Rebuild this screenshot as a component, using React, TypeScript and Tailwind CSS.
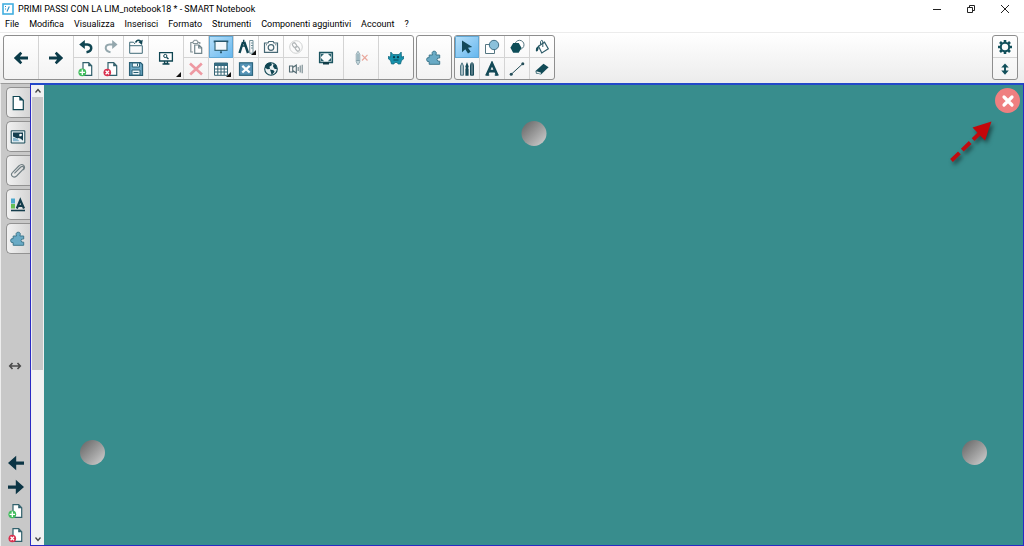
import React from "react";

type IconProps = { children: React.ReactNode; size?: "sm" | "md" };

function Icon({ children, size = "md" }: IconProps) {
  const cls = size === "sm" ? "size-3" : "size-4";
  return (
    <svg viewBox="0 0 16 16" className={`${cls} shrink-0`} fill="none" aria-hidden="true">
      {children}
    </svg>
  );
}

const INK = "#0f4552";
const BLUE = "#6faac6";

const ArrowLeft = () => (
  <Icon>
    <path d="M.8 8 7.4 1.8 9.2 3.4 6.9 6.4H15V9.6H6.9L9.2 12.6 7.4 14.2Z" fill="#0b3b49" />
  </Icon>
);
const ArrowRight = () => (
  <Icon>
    <path d="M15.2 8 8.6 1.8 6.8 3.4 9.1 6.4H1V9.6H9.1L6.8 12.6 8.6 14.2Z" fill="#0b3b49" />
  </Icon>
);
const PrevPage = () => (
  <Icon>
    <path d="M0 8 8.2 .8V6.4H16V9.7H8.2V15.2Z" fill="#0b3444" />
  </Icon>
);
const NextPage = () => (
  <Icon>
    <path d="M16 8 7.8 .8V6.4H0V9.7H7.8V15.2Z" fill="#0b3444" />
  </Icon>
);
const Undo = () => (
  <Icon>
    <path d="M4 5.5H9.5Q13.3 5.8 13.3 9.2 13 12.5 8.5 13.3" stroke={INK} strokeWidth="2.4" />
    <path d="M1.2 5.5 6.8 1V10Z" fill={INK} />
  </Icon>
);
const Redo = () => (
  <Icon>
    <path d="M12 5.5H6.5Q2.7 5.8 2.7 9.2 3 12.5 7.5 13.3" stroke="#94a7ad" strokeWidth="2" />
    <path d="M14.5 5.5 9.2 1V10Z" fill="#94a7ad" />
  </Icon>
);
const OpenFolder = () => (
  <Icon>
    <path d="M1.7 14.3V3.2H5.5L7 5M1.7 14.3H14.3V6.7H1.7" stroke="#416c79" />
    <path d="M7.5 3.5Q10-.3 12.7 2.4" stroke={INK} strokeWidth="1.5" />
    <path d="M10.4 3 14.7.8 14 6Z" fill={INK} />
  </Icon>
);
const AddPage = () => (
  <Icon>
    <path d="M5 1.7H10.7L13.7 4.7V14.3H5Z" fill="#fff" stroke="#31606c" strokeWidth="1.2" />
    <path d="M10.2 1.7V5.3H14Z" fill="#31606c" />
    <circle cx="4.3" cy="11.3" r="3.9" fill="#41bd5d" />
    <path d="M4.3 8.6V14M1.6 11.3H7" stroke="#fff" strokeWidth="1.3" />
  </Icon>
);
const DeletePage = () => (
  <Icon>
    <path d="M5 1.7H10.7L13.7 4.7V14.3H5Z" fill="#fff" stroke="#31606c" strokeWidth="1.2" />
    <path d="M10.2 1.7V5.3H14Z" fill="#31606c" />
    <circle cx="4.3" cy="11.5" r="3.8" fill="#d9304e" />
    <path d="m2.6 9.8 3.4 3.4m0-3.4-3.4 3.4" stroke="#fff" strokeWidth="1.3" />
  </Icon>
);
const Save = () => (
  <Icon>
    <path d="M1.6 1.6H12.5L14.5 3.6V14.4H1.6Z" fill={BLUE} stroke="#285f75" strokeWidth="1.3" />
    <path d="M4.3 2H11.5V6H4.3ZM4 9H12V14H4Z" fill="#edf5f8" stroke="#285f75" />
    <path d="M9.5 2.5V5M5.5 11.5H10.5" stroke="#285f75" />
  </Icon>
);
const Screen = () => (
  <Icon>
    <path d="M1.6 2.6H14.4V11H1.6Z" fill="#fff" stroke={INK} strokeWidth="1.3" />
    <path d="M6.5 11V13.5H9.5V11M4.5 14H11.5" stroke={INK} strokeWidth="1.3" />
    <circle cx="7.3" cy="6" r="1.6" stroke={INK} />
    <path d="m8.5 7.2 2 1.8" stroke={INK} strokeWidth="1.4" />
  </Icon>
);
const Paste = () => (
  <Icon>
    <path d="M5 13H2.8V3.5H5M9.5 3.5H11.8V5" stroke="#849398" strokeWidth="1.2" />
    <path d="M5 2.3H6V1.3H9V2.3H10V4.5H5Z" stroke="#849398" />
    <path d="M6.7 6H11L13.7 8.7V14.3H6.7ZM10.7 6V9H13.5" fill="#fff" stroke="#71858c" strokeWidth="1.2" />
  </Icon>
);
const RedCross = () => (
  <Icon>
    <path d="M2 2.5 14 13.5M13.8 2.5 2.2 13.5" stroke="#ee99a2" strokeWidth="2.6" />
  </Icon>
);
const Shade = () => (
  <Icon>
    <path d="M.7 2.5H15.3" stroke="#26566b" strokeWidth="1.8" />
    <path d="M2 3V11.3H14V3" fill="#f2f8fb" stroke="#3a6a7d" strokeWidth="1.2" />
    <path d="M8 11V12.5" stroke="#26566b" />
    <circle cx="8" cy="13.3" r="1.1" fill="#26566b" />
  </Icon>
);
const TableIcon = () => (
  <Icon>
    <path d="M1.5 2H14.5V14.3H1.5Z" fill="#fff" stroke="#356474" />
    <path d="M1.5 2H14.5V5H1.5Z" fill="#356c82" />
    <path d="M1.5 8H14.5M1.5 11H14.5M4.8 5V14M8 5V14M11.2 5V14" stroke="#356474" />
  </Icon>
);
const Measure = () => (
  <Icon>
    <path d="M5 3 1.5 14M6.3 3 10 14" stroke={INK} strokeWidth="2.4" />
    <path d="M5.7 .8V4M3.5 7H8" stroke={INK} strokeWidth="1.5" />
    <path d="M11.7 1.5H15V14.2H11.7ZM13 4H15M13 6.5H15M13 9H15" stroke="#70909a" />
  </Icon>
);
const Widget = () => (
  <Icon>
    <rect x="1.5" y="1.8" width="13" height="12.5" fill="#5794b7" stroke="#2b657e" strokeWidth="1.2" />
    <path d="M4.3 4.8 11.7 11.5M11.7 4.8 4.3 11.5" stroke="#fff" strokeWidth="2.3" />
  </Icon>
);
const Camera = () => (
  <Icon>
    <path d="M1.5 4H5L5.8 2.5H10.2L11 4H14.5V13.3H1.5Z" stroke="#466875" strokeWidth="1.2" />
    <circle cx="8" cy="8.5" r="2.8" stroke="#466875" strokeWidth="1.2" />
    <path d="M3 5.8H4M12.2 5.8H13.3" stroke="#466875" />
  </Icon>
);
const Globe = () => (
  <Icon>
    <circle cx="8" cy="8" r="6.3" fill="#e9f0f1" stroke={INK} strokeWidth="1.1" />
    <path d="M2 5Q4 1 8 1.6L9 4 6.5 5.8 7 8 4.5 8.2 2 6.8ZM7 8.5 10.5 9.2 11.6 10.8 8.7 14 7.8 11ZM10.5 3 13.2 4.3 14.2 8 11.7 8 10 5.5Z" fill={INK} />
  </Icon>
);
const Link = () => (
  <Icon>
    <circle cx="8" cy="8" r="6.3" stroke="#d0d2d2" />
    <g transform="rotate(-38 8 8)" stroke="#b2b7b9" strokeWidth="1.2">
      <rect x="6.3" y="3.2" width="3.4" height="5" rx="1.7" />
      <rect x="6.3" y="7.8" width="3.4" height="5" rx="1.7" />
    </g>
  </Icon>
);
const Speaker = () => (
  <Icon>
    <path d="M1.5 5H4.7V11H1.5ZM4.7 6.5 8.3 4V12L4.7 9.5" stroke="#526a72" strokeWidth="1.1" />
    <path d="M10.2 6V10M12.2 4.5V11.5M14.2 3.8V12.2" stroke="#71858b" strokeWidth="1.1" />
  </Icon>
);
const FullScreen = () => (
  <Icon>
    <path d="M1.7 2.5H14.3V12.5H1.7Z" fill="#fbfcfc" stroke="#1b5460" strokeWidth="1.6" />
    <path d="M3 7V3.8H6.2ZM9.8 3.8H13V7ZM13 8V11.2H9.8ZM6.2 11.2H3V8Z" fill="#2b6470" />
    <path d="M5 12H11V14.5H5Z" fill="#123d48" />
  </Icon>
);
const PenCross = () => (
  <Icon>
    <path d="M3.2 12V4.2L5 1.2 6.8 4.2V12L5 15Z" fill="#bfd4da" stroke="#9bb0b7" />
    <path d="M5 4V11M3.3 10.5H6.7" stroke="#829fa9" />
    <path d="m9 4.8 5.5 5.7m0-5.7L9 10.5" stroke="#e9a89d" strokeWidth="1.2" />
  </Icon>
);
const Monster = () => (
  <Icon>
    <path d="M2.8 2 5 4.5H11L13.2 2 13.5 7 16 6.5 15.5 9 13.5 10.5 12.5 14H10L9.3 12.5H6.7L6 14H3.5L2.5 10.5 .5 9 0 6.5 2.5 7Z" fill="#1692ad" stroke="#0c6277" strokeWidth=".7" />
    <circle cx="6" cy="7.2" r="1.1" fill="#07394b" />
    <circle cx="10" cy="7.2" r="1.1" fill="#07394b" />
    <path d="M5.5 10H10.5" stroke="#064558" />
  </Icon>
);
const Puzzle = () => (
  <Icon>
    <path d="M3.2 5H6.5Q5.2 1.2 8.2 1.2 11.2 1.2 9.9 5H13.7V8Q11 7.4 11 9.6 11 11.7 13.7 11.2V14.3H3.2V11.7Q.6 12 .6 9.5.6 7.2 3.2 7.6Z" fill="#69aac5" stroke="#3f788d" strokeWidth="1" />
  </Icon>
);
const Pointer = () => (
  <Icon>
    <path d="M3 1.5V13.2L6.3 10.2 9 14.5 11.7 12.8 9 8.8 13.3 8Z" fill="#12495a" />
  </Icon>
);
const Shapes = () => (
  <Icon>
    <path d="M1.5 5.5H10.5V14.5H1.5Z" fill="#fff" stroke="#557681" />
    <circle cx="10" cy="6" r="4.7" fill="#8bc1db" stroke="#417187" />
  </Icon>
);
const Polygon = () => (
  <Icon>
    <circle cx="10.5" cy="5.8" r="4.5" fill="#fff" stroke="#557681" />
    <path d="M4.2 4H9.7L12.5 8.8 9.7 13.8H4.2L1.4 8.8Z" fill="#0d4d58" />
  </Icon>
);
const Bucket = () => (
  <Icon>
    <path d="M4.5 7.2 10.5 3.2 14.3 9.8 7.8 14Z" fill="#fff" stroke="#315e6b" strokeWidth="1.2" />
    <path d="M8.8 8V3Q8.8 1.2 7.5 1.4T6.5 5.5" stroke="#315e6b" />
    <path d="M4.8 6.6Q1.8 8.4 1.8 11.4 2 13 3.6 12.1 4.7 11 4.8 6.6Z" fill="#174d59" />
  </Icon>
);
const Pens = () => (
  <Icon>
    <path d="M1.5 14.2V5L3 1.8 4.5 5V14.2Z" fill="#a5bac2" stroke="#527985" />
    <path d="M8 1 9.7 5.5 9 7.5H9.6V14.7H6.4V7.5H7L6.3 5.5Z" fill="#174b59" />
    <path d="M11.5 14.2V5Q11.5 2 13 1.5 14.5 2 14.5 5V14.2Z" fill="#557985" stroke="#174b59" />
  </Icon>
);
const TextTool = () => (
  <Icon>
    <path d="M2.8 14 8 2.5 13.2 14M4.8 10.2H11.2" stroke="#134956" strokeWidth="2.7" />
    <path d="M1.5 14H5.2M10.8 14H14.5" stroke="#134956" strokeWidth="1.4" />
  </Icon>
);
const LineTool = () => (
  <Icon>
    <path d="M2 13.5 14 2.5" stroke="#254e59" />
    <circle cx="2.2" cy="13.3" r="1.5" fill="#254e59" />
    <circle cx="13.8" cy="2.7" r="1.5" fill="#254e59" />
  </Icon>
);
const Eraser = () => (
  <Icon>
    <path d="M1.5 10 9.5 2.8 14.6 6.3 7 13.6 2 12.6Z" fill="#124b57" />
    <path d="M2.4 10.2 6.8 11.5V12.9L2.6 12Z" fill="#e8eff0" />
  </Icon>
);
const Gear = () => (
  <Icon>
    <path d="M8 1V4M8 12V15M1 8H4M12 8H15M3 3 5 5M11 11 13 13M13 3 11 5M5 11 3 13" stroke="#12505b" strokeWidth="2.6" />
    <circle cx="8" cy="8" r="4.2" stroke="#12505b" strokeWidth="2" />
  </Icon>
);
const UpDown = () => (
  <Icon size="sm">
    <path d="M8 3V13" stroke="#12505b" strokeWidth="2.6" />
    <path d="M8 .5 13 6H3ZM8 15.5 13 10H3Z" fill="#12505b" />
  </Icon>
);
const Page = () => (
  <Icon>
    <path d="M3.2 1.5H9.5L13.3 5.3V14.7H3.2Z" fill="#fff" stroke={INK} strokeWidth="1.2" />
    <path d="M9.3 1.5V5.5H13.3Z" fill={INK} />
  </Icon>
);
const Gallery = () => (
  <Icon>
    <path d="M1.2 1.8H14.8V14H1.2Z" fill="#e8f1f4" stroke="#174856" />
    <path d="M3 3.5H13V11.8Q10 8.2 7.3 9.4L3 7.5Z" fill="#143f50" />
    <path d="m9 5.8 1.2-1 1.8.5-.5 1.6-1.8.5Z" fill="#fff" />
    <path d="M3 8.8Q7.2 9 9.5 12.3H3Z" fill="#86b7cf" />
  </Icon>
);
const Clip = () => (
  <Icon>
    <path d="M4.4 10.4 10.8 4Q12.5 2.8 13.4 4T12.8 6.7L6.6 13Q3.9 15.1 2.2 13.2T2.6 9.3L8.8 3Q11.6.4 13.7 2.4 15.6 4.6 13.2 7" stroke="#6e7d82" strokeWidth="1.1" />
  </Icon>
);
const Properties = () => (
  <Icon>
    <path d="M1 1.5H5V6.5H1Z" fill="#4ca8ce" />
    <path d="M1 7H5V11.5H1Z" fill="#65bf57" />
    <path d="M6.8 11.5 10.3 3 14 11.5M8 8.8H12.5" stroke="#143d4c" strokeWidth="2.2" />
    <path d="M1 13.5H15" stroke="#143d4c" strokeWidth="1.6" />
  </Icon>
);

type Tool = { label: string; icon: React.ReactNode; active?: boolean; more?: boolean };

function ToolButton({ tool, big }: { tool: Tool; big?: boolean }) {
  return (
    <button
      type="button"
      aria-label={tool.label}
      className={`relative flex items-center justify-center ${big ? "box-content h-full w-[34px]" : "min-h-0 w-6 flex-1"} ${
        tool.active ? "bg-linear-to-br from-[#b8e1fa] to-[#63b6ee] outline -outline-offset-1 outline-[#62a9d6]" : ""
      }`}
    >
      {tool.icon}
      {tool.more && (
        <svg viewBox="0 0 5 5" className="absolute right-0.5 bottom-0.5 size-[5px]" aria-hidden="true">
          <path d="M5 0V5H0Z" fill="#111" />
        </svg>
      )}
    </button>
  );
}

function Stack({ tools }: { tools: Tool[] }) {
  return (
    <div className="flex h-full flex-col divide-y divide-[#d4d4d4]">
      {tools.map((t) => (
        <ToolButton key={t.label} tool={t} />
      ))}
    </div>
  );
}

function Group({ children }: { children: React.ReactNode }) {
  return (
    <div className="flex h-[45px] divide-x divide-[#d4d4d4] overflow-hidden rounded-[3px] border border-[#8e8e8e] bg-linear-to-b from-white to-[#f3f3f3]">
      {children}
    </div>
  );
}

const mainStacks: Tool[][] = [
  [{ label: "Annulla", icon: <Undo /> }, { label: "Aggiungi pagina", icon: <AddPage /> }],
  [{ label: "Ripeti", icon: <Redo /> }, { label: "Elimina pagina", icon: <DeletePage /> }],
  [{ label: "Apri", icon: <OpenFolder /> }, { label: "Salva", icon: <Save /> }],
];
const insertStacks: Tool[][] = [
  [{ label: "Incolla", icon: <Paste /> }, { label: "Elimina", icon: <RedCross /> }],
  [{ label: "Tendina", icon: <Shade />, active: true }, { label: "Tabella", icon: <TableIcon />, more: true }],
  [{ label: "Strumenti di misura", icon: <Measure />, more: true }, { label: "Widget", icon: <Widget /> }],
  [{ label: "Fotocamera", icon: <Camera /> }, { label: "Browser", icon: <Globe /> }],
  [{ label: "Collegamento", icon: <Link /> }, { label: "Audio", icon: <Speaker /> }],
];
const drawStacks: Tool[][] = [
  [{ label: "Seleziona", icon: <Pointer />, active: true }, { label: "Penne", icon: <Pens /> }],
  [{ label: "Forme", icon: <Shapes /> }, { label: "Testo", icon: <TextTool /> }],
  [{ label: "Poligoni", icon: <Polygon /> }, { label: "Linee", icon: <LineTool /> }],
  [{ label: "Riempimento", icon: <Bucket /> }, { label: "Gomma", icon: <Eraser /> }],
];
const menus = ["File", "Modifica", "Visualizza", "Inserisci", "Formato", "Strumenti", "Componenti aggiuntivi", "Account", "?"];
const tabs: Tool[] = [
  { label: "Pagine", icon: <Page /> },
  { label: "Raccolta", icon: <Gallery /> },
  { label: "Allegati", icon: <Clip /> },
  { label: "Proprietà", icon: <Properties /> },
  { label: "Componenti", icon: <Puzzle /> },
];
const pageNav: Tool[] = [
  { label: "Pagina precedente", icon: <PrevPage /> },
  { label: "Pagina successiva", icon: <NextPage /> },
  { label: "Nuova pagina", icon: <AddPage /> },
  { label: "Rimuovi pagina", icon: <DeletePage /> },
];

function TitleBar() {
  return (
    <header className="flex h-[17px] items-center pr-0.5 pl-0.5">
      <svg viewBox="0 0 12 12" className="size-3" aria-hidden="true">
        <rect x="1" y="1" width="10" height="10" fill="#fff" stroke="#42aee0" strokeWidth="1.6" />
        <path d="m5 8.5 2.3-5M3 3.5h1M3 6h1" stroke="#268cc5" strokeWidth="1.1" />
      </svg>
      <h1 className="ml-1 text-[9px] leading-4">PRIMI PASSI CON LA LIM_notebook18 * - SMART Notebook</h1>
      <div className="ml-auto flex">
        <button type="button" aria-label="Riduci a icona" className="flex w-[34px] justify-center">
          <svg viewBox="0 0 10 10" className="size-2.5"><path d="M1 5.5H9" stroke="#222" /></svg>
        </button>
        <button type="button" aria-label="Ripristina" className="flex w-[34px] justify-center">
          <svg viewBox="0 0 10 10" className="size-2.5" fill="none">
            <path d="M1.5 3.5H6.5V8.5H1.5ZM3.5 3V1.5H8.5V6.5H7" stroke="#222" />
          </svg>
        </button>
        <button type="button" aria-label="Chiudi" className="flex w-[34px] justify-center">
          <svg viewBox="0 0 10 10" className="size-2.5"><path d="m1 1 8 8m0-8L1 9" stroke="#222" /></svg>
        </button>
      </div>
    </header>
  );
}

function Toolbar() {
  return (
    <div role="toolbar" className="flex gap-0.5 border-t border-[#ececec] bg-linear-to-b from-white to-[#ececec] px-[3px] pt-0.5 pb-[3px]">
      <Group>
        <ToolButton big tool={{ label: "Indietro", icon: <ArrowLeft /> }} />
        <ToolButton big tool={{ label: "Avanti", icon: <ArrowRight /> }} />
        {mainStacks.map((s) => <Stack key={s[0].label} tools={s} />)}
        <ToolButton big tool={{ label: "Visualizza schermo", icon: <Screen />, more: true }} />
        {insertStacks.map((s) => <Stack key={s[0].label} tools={s} />)}
        <ToolButton big tool={{ label: "Schermo intero", icon: <FullScreen /> }} />
        <ToolButton big tool={{ label: "Cancella inchiostro", icon: <PenCross /> }} />
        <ToolButton big tool={{ label: "Attività", icon: <Monster /> }} />
      </Group>
      <Group>
        <ToolButton big tool={{ label: "Componenti aggiuntivi", icon: <Puzzle /> }} />
      </Group>
      <Group>
        {drawStacks.map((s) => <Stack key={s[0].label} tools={s} />)}
      </Group>
      <div className="mr-[3px] ml-auto">
        <Group>
          <Stack tools={[{ label: "Impostazioni", icon: <Gear /> }, { label: "Sposta barra", icon: <UpDown /> }]} />
        </Group>
      </div>
    </div>
  );
}

function Sidebar() {
  return (
    <aside className="flex w-[30px] shrink-0 flex-col border-t border-l border-t-[#9b9b9b] border-l-[#ededed] bg-[#c8c8c8] pt-[3px] pb-[3px]">
      <div className="flex flex-col gap-[3px] pl-[5px]">
        {tabs.map((t) => (
          <button
            key={t.label}
            type="button"
            aria-label={t.label}
            className="flex h-[31px] items-center justify-center rounded-l-[5px] border border-r-0 border-[#929292] bg-linear-to-r from-[#f1f1f1] to-[#d4d4d4] pr-0.5"
          >
            {t.icon}
          </button>
        ))}
      </div>
      <button type="button" aria-label="Ridimensiona barra" className="mt-[104px] flex justify-center pr-0.5">
        <Icon>
          <path d="M3 8H13M5.5 5 2.7 8 5.5 11M10.5 5 13.3 8 10.5 11" stroke="#4a4a4a" strokeWidth="1.6" />
        </Icon>
      </button>
      <nav className="mt-auto flex flex-col gap-2">
        {pageNav.map((t) => (
          <button key={t.label} type="button" aria-label={t.label} className="flex justify-center">
            {t.icon}
          </button>
        ))}
      </nav>
    </aside>
  );
}

function ScrollBar() {
  return (
    <div className="flex w-[13px] shrink-0 flex-col bg-[#f1f1f1]">
      <button type="button" aria-label="Scorri su" className="flex h-3 shrink-0 items-center justify-center">
        <svg viewBox="0 0 8 8" className="size-2" fill="none"><path d="m1.5 5.5 2.5-3 2.5 3" stroke="#444" strokeWidth="1.3" /></svg>
      </button>
      <div className="min-h-0 flex-1 px-px">
        <div className="h-5/8 bg-[#c9c9c9]" />
      </div>
      <button type="button" aria-label="Scorri giù" className="flex h-3 shrink-0 items-center justify-center">
        <svg viewBox="0 0 8 8" className="size-2" fill="none"><path d="m1.5 2.5 2.5 3 2.5-3" stroke="#444" strokeWidth="1.3" /></svg>
      </button>
    </div>
  );
}

const disc = "absolute size-[25px] rounded-full bg-linear-to-br from-[#626262] to-[#d4d4d4]";

function Board() {
  return (
    <main className="relative min-w-0 flex-1 overflow-hidden bg-[#388d8d]">
      <button type="button" aria-label="Trascina in alto" className={`${disc} top-9 left-1/2 -translate-x-1/2`} />
      <button type="button" aria-label="Trascina a sinistra" className={`${disc} bottom-20 left-9`} />
      <button type="button" aria-label="Trascina a destra" className={`${disc} right-9 bottom-20`} />
      <button
        type="button"
        aria-label="Chiudi tendina"
        className="absolute top-[3px] right-[3px] flex size-[25px] items-center justify-center rounded-full bg-[#ef7f80]"
      >
        <svg viewBox="0 0 16 16" className="size-4" aria-hidden="true">
          <path d="m4 4 8 8m0-8-8 8" stroke="#fff" strokeWidth="3.2" strokeLinecap="round" />
        </svg>
      </button>
      <svg viewBox="0 0 52 52" className="absolute top-8 right-6 size-[52px] drop-shadow-[2px_3px_2px_rgba(0,0,0,0.5)]" fill="none" aria-hidden="true">
        <path d="M4.5 43.5 33 16" stroke="#c00c10" strokeWidth="4" strokeDasharray="11 4" />
        <path d="M44.5 4.5 25.5 10.5 38 23.5Z" fill="#c4070a" />
      </svg>
    </main>
  );
}

export default function App() {
  return (
    <div className="flex h-screen flex-col overflow-hidden bg-white font-[Roboto,'Noto_Sans',sans-serif] text-black">
      <TitleBar />
      <nav className="flex h-[15px] items-center gap-2.5 pl-[5px] text-[9px] leading-[15px]">
        {menus.map((m) => (
          <button key={m} type="button" className="whitespace-nowrap">{m}</button>
        ))}
      </nav>
      <Toolbar />
      <div className="flex min-h-0 flex-1">
        <Sidebar />
        <div className="flex min-w-0 flex-1 border border-t-2 border-[#2a2ac4] border-t-[#2349c9]">
          <ScrollBar />
          <Board />
        </div>
      </div>
    </div>
  );
}
